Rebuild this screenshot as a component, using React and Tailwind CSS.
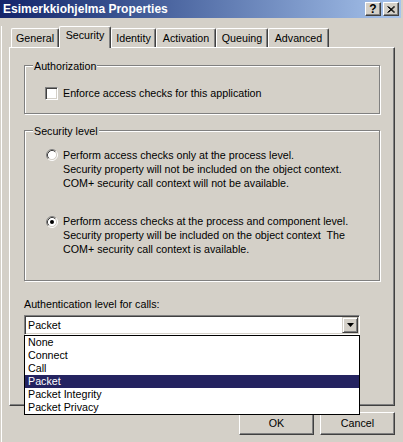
const raised =
  "border border-t-white border-l-white border-r-[#404040] border-b-[#404040] shadow-[inset_-1px_-1px_0_#808080]";
const sunken =
  "border border-t-[#808080] border-l-[#808080] border-r-white border-b-white shadow-[inset_1px_1px_0_#404040,inset_-1px_-1px_0_#d4d0c8]";

const tabs = [
  { label: "General", w: "w-[48px]" },
  { label: "Security", w: "w-[52px]", active: true },
  { label: "Identity", w: "w-[45px]" },
  { label: "Activation", w: "w-[60px]" },
  { label: "Queuing", w: "w-[52px]" },
  { label: "Advanced", w: "w-[61px]" },
];

const levels = ["None", "Connect", "Call", "Packet", "Packet Integrity", "Packet Privacy"];

function Radio({ checked }) {
  return (
    <svg width="12" height="12" viewBox="0 0 12 12" className="shrink-0">
      <circle cx="6" cy="6" r="4.5" fill="#fff" />
      <path d="M2.11 9.89A5.5 5.5 0 0 1 9.89 2.11" fill="none" stroke="#808080" />
      <path d="M9.89 2.11A5.5 5.5 0 0 1 2.11 9.89" fill="none" stroke="#fff" />
      <path d="M2.82 9.18A4.5 4.5 0 0 1 9.18 2.82" fill="none" stroke="#404040" />
      <path d="M9.18 2.82A4.5 4.5 0 0 1 2.82 9.18" fill="none" stroke="#d4d0c8" />
      {checked && <circle cx="6" cy="6" r="2" fill="#000" />}
    </svg>
  );
}

function GroupBox({ title, className, children }) {
  return (
    <div
      className={`relative w-[356px] border border-[#808080] shadow-[inset_1px_1px_0_#fff,1px_1px_0_#fff] ${className}`}
    >
      <span className="absolute -top-[7px] left-[8px] bg-[#d4d0c8] px-px leading-[14px]">{title}</span>
      {children}
    </div>
  );
}

export default function App() {
  return (
    <div className="w-[403px] h-[442px] overflow-hidden bg-[#d4d0c8] text-[10.7px] text-black font-['Liberation_Sans',Arial,sans-serif]">
      {/* title bar */}
      <div className="h-[18px] w-[401px] flex items-center justify-between pl-[3px] pr-[2px] bg-gradient-to-r from-[#14246a] to-[#a8c4ec]">
        <span className="text-white font-bold text-[12px] leading-[18px]">Esimerkkiohjelma Properties</span>
        <div className="flex gap-[2px]">
          <div className={`w-[16px] h-[14px] bg-[#d4d0c8] flex items-center justify-center font-bold text-[12px] leading-none ${raised}`}>
            ?
          </div>
          <div className={`w-[16px] h-[14px] bg-[#d4d0c8] flex items-center justify-center ${raised}`}>
            <svg width="8" height="7" viewBox="0 0 8 7">
              <path d="M0.5 0.5L7 6.5M1.5 0.5L8 6.5M7 0.5L0.5 6.5M8 0.5L1.5 6.5" stroke="#000" strokeWidth="1" />
            </svg>
          </div>
        </div>
      </div>

      {/* body */}
      <div className="ml-px h-[424px] border-l border-white pl-[7px]">
        {/* tab strip */}
        <div className="mt-[8px] ml-[2px] h-[21px] flex items-end">
          {tabs.map((t) =>
            t.active ? (
              <div
                key={t.label}
                className={`${t.w} relative z-10 -mb-px h-[22px] bg-[#d4d0c8] rounded-t-[2px] border-t border-l border-white border-r border-r-[#404040] shadow-[inset_-1px_0_0_#808080] text-center leading-[17px]`}
              >
                {t.label}
              </div>
            ) : (
              <div
                key={t.label}
                className={`${t.w} h-[19px] rounded-t-[2px] border-t border-l border-white border-r border-r-[#404040] shadow-[inset_-1px_0_0_#808080] text-center leading-[18px]`}
              >
                {t.label}
              </div>
            )
          )}
        </div>

        {/* panel */}
        <div className="w-[386px] h-[359px] border-t border-l border-white border-r border-b border-r-[#404040] border-b-[#404040] shadow-[inset_-1px_-1px_0_#808080] pl-[14px] pt-[17px]">
          <GroupBox title="Authorization" className="h-[49px]">
            <div className="flex items-center gap-[5px] pl-[20px] pt-[20px]">
              <div className={`w-[13px] h-[13px] bg-white ${sunken}`} />
              <span className="leading-[14px]">Enforce access checks for this application</span>
            </div>
          </GroupBox>

          <GroupBox title="Security level" className="mt-[16px] h-[151px]">
            <div className="pl-[21px] pt-[17px] leading-[14px]">
              <div className="flex items-start gap-[5px]">
                <div className="mt-[1px]">
                  <Radio />
                </div>
                <div>
                  <div>Perform access checks only at the process level.</div>
                  <div>Security property will not be included on the object context.</div>
                  <div>COM+ security call context will not be available.</div>
                </div>
              </div>
              <div className="mt-[24px] flex items-start gap-[5px]">
                <div className="mt-[2px]">
                  <Radio checked />
                </div>
                <div>
                  <div>Perform access checks at the process and component level.</div>
                  <div>Security property will be included on the object context&nbsp; The</div>
                  <div>COM+ security call context is available.</div>
                </div>
              </div>
            </div>
          </GroupBox>

          <div className="mt-[16px] leading-[14px]">Authentication level for calls:</div>

          {/* combo */}
          <div className={`relative mt-[4px] w-[336px] h-[20px] bg-white flex items-center justify-between pl-[3px] pr-px ${sunken}`}>
            <span className="leading-[14px]">Packet</span>
            <div className="w-[16px] h-[16px] bg-[#d4d0c8] flex items-center justify-center border border-t-[#d4d0c8] border-l-[#d4d0c8] border-r-[#404040] border-b-[#404040] shadow-[inset_1px_1px_0_#fff,inset_-1px_-1px_0_#808080]">
              <svg width="7" height="4" viewBox="0 0 7 4">
                <path d="M0 0H7L3.5 4Z" fill="#000" />
              </svg>
            </div>

            {/* open list */}
            <div className="absolute top-[19px] -left-px z-20 w-[336px] h-[80px] bg-white border border-black">
              {levels.map((l) => (
                <div
                  key={l}
                  className={`h-[13px] leading-[13px] pl-[3px] ${l === "Packet" ? "bg-[#242360] text-white" : ""}`}
                >
                  {l}
                </div>
              ))}
            </div>
          </div>
        </div>

        {/* buttons */}
        <div className="w-[386px] mt-[6px] flex justify-end gap-[6px]">
          <div className={`w-[75px] h-[23px] flex items-center justify-center ${raised}`}>OK</div>
          <div className={`w-[75px] h-[23px] flex items-center justify-center ${raised}`}>Cancel</div>
        </div>
      </div>
    </div>
  );
}
